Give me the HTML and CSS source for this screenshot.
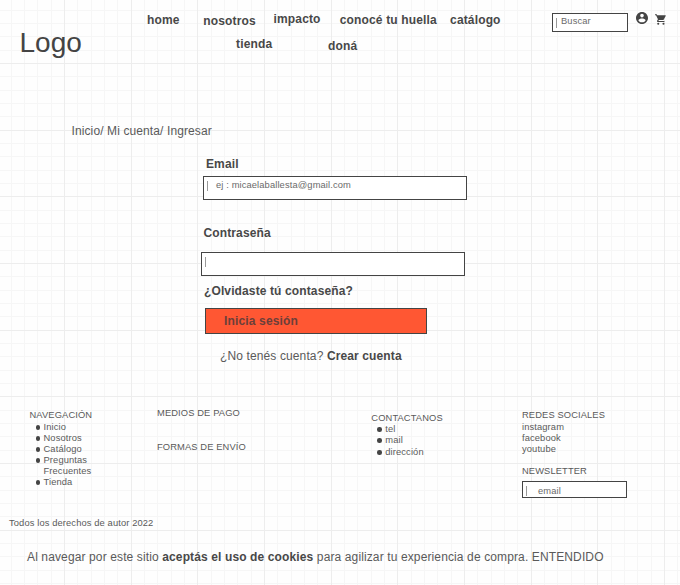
FILE: index.html
```html
<!DOCTYPE html>
<html lang="es">
<head>
<meta charset="utf-8">
<title>Ingresar</title>
<link rel="stylesheet" href="styles.css">
</head>
<body>
<header class="header">
  <div class="logo">Logo</div>
  <nav class="nav">
    <div class="nav-row">
      <a class="home">home</a><a class="nosotros">nosotros</a><a class="impacto">impacto</a><a class="huella">conocé tu huella</a><a class="catalogo">catálogo</a>
    </div>
    <div class="nav-row nav-row-second">
      <a class="tienda">tienda</a><a class="dona">doná</a>
    </div>
  </nav>
  <div class="search field"><i class="caret"></i><span>Buscar</span></div>
  <svg class="account" viewBox="2 2 20 20"><path d="M12 2C6.480 2 2 6.480 2 12s4.480 10 10 10 10-4.480 10-10S17.520 2 12 2zm0 3c1.660 0 3 1.340 3 3s-1.340 3-3 3-3-1.340-3-3 1.340-3 3-3zm0 14.200c-2.500 0-4.710-1.280-6-3.220.030-1.990 4-3.080 6-3.080 1.990 0 5.970 1.090 6 3.080-1.290 1.940-3.500 3.220-6 3.220z"/></svg>
  <svg class="cart" viewBox="1 2 21 20"><path d="M1 2v2h2l3.600 7.600L5 14.500c-.6 1.200.5 2.500 2 2.500h12v-2H7.400l1.100-2h7.500c.8 0 1.400-.4 1.700-1l3.700-6.500c.4-.7 0-1.500-.9-1.500H5.200l-.9-2z"/><circle cx="7.200" cy="20" r="2"/><circle cx="17.200" cy="20" r="2"/></svg>
</header>
<main class="main">
  <div class="crumbs">Inicio/ Mi cuenta/ Ingresar</div>
  <form class="login">
    <label class="label-email">Email</label>
    <div class="field input-email"><i class="caret"></i><span>ej : micaelaballesta@gmail.com</span></div>
    <label class="label-pass">Contraseña</label>
    <div class="field input-pass"><i class="caret"></i></div>
    <a class="forgot">¿Olvidaste tú contaseña?</a>
    <div class="submit"><span>Inicia sesión</span></div>
    <p class="signup">¿No tenés cuenta? <b>Crear cuenta</b></p>
  </form>
</main>
<footer class="footer">
  <section class="col-nav">
    <h4>NAVEGACIÓN</h4>
    <ul><li>Inicio</li><li>Nosotros</li><li>Catálogo</li><li>Preguntas<br>Frecuentes</li><li>Tienda</li></ul>
  </section>
  <section class="col-pay">
    <h4>MEDIOS DE PAGO</h4>
    <h4 class="shipping">FORMAS DE ENVÍO</h4>
  </section>
  <section class="col-contact">
    <h4>CONTACTANOS</h4>
    <ul><li>tel</li><li>mail</li><li>dirección</li></ul>
  </section>
  <section class="col-social">
    <h4>REDES SOCIALES</h4>
    <p>instagram<br>facebook<br>youtube</p>
    <h4 class="newsletter">NEWSLETTER</h4>
    <div class="field input-news"><i class="caret"></i><span>email</span></div>
  </section>
</footer>
<div class="copyright">Todos los derechos de autor 2022</div>
<div class="cookies">Al navegar por este sitio <b>aceptás el uso de cookies</b> para agilizar tu experiencia de compra. <span>ENTENDIDO</span></div>
</body>
</html>
```
FILE: styles.css
```css
* { box-sizing: border-box; margin: 0; padding: 0; }
body {
  width: 680px;
  height: 585px;
  overflow: hidden;
  font: 12px/14px "Liberation Sans", Arial, sans-serif;
  color: #5a5a5a;
  background-color: #fefefe;
  background-image:
    repeating-linear-gradient(90deg, #ededed 0 1px, transparent 1px 66.667px),
    repeating-linear-gradient(180deg, #ededed 0 1px, transparent 1px 66.667px),
    repeating-linear-gradient(90deg, #f6f6f6 0 1px, transparent 1px 13.333px),
    repeating-linear-gradient(180deg, #f6f6f6 0 1px, transparent 1px 13.333px);
  background-size: 800px 800px;
  background-position: -2.6px -3.6px;
}
b { color: #484848; }
a, label { display: block; font-weight: bold; color: #484848; white-space: nowrap; }

.field { display: flex; border: 1px solid #444; background: #fff; font-size: 9.333px; line-height: 11px; letter-spacing: .12px; color: #6a6a6a; white-space: nowrap; }
.caret { flex: none; width: 1px; height: 10px; background: #999; }

.header { display: flex; height: 124px; padding-left: 19.500px; color: #444; }
.logo { width: 127.500px; padding-top: 27px; font-size: 28px; line-height: 31px; }
.nav { width: 405px; padding-top: 13px; }
.nav-row { display: flex; height: 24px; letter-spacing: .15px; }
.nosotros { margin: 1px 0 0 23.700px; }
.impacto { margin: -1px 0 0 17.700px; }
.huella { margin-left: 19.200px; }
.catalogo { margin-left: 13.200px; }
.tienda { margin-left: 89px; }
.dona { margin: 2px 0 0 55.700px; }
.search { width: 76px; height: 19px; margin-top: 13px; padding: 2px 0 0 3px; }
.search .caret { margin-top: 2px; }
.search span { margin-left: 4px; }
.account { width: 12px; height: 12px; margin: 12px 0 0 8px; fill: #444; }
.cart { width: 11px; height: 11px; margin: 14px 0 0 7px; fill: #444; }

.main { height: 284px; }
.crumbs { padding-left: 71.500px; letter-spacing: .11px; }
.login { padding: 19px 0 0 201px; letter-spacing: .12px; }
.label-email { margin-left: 5px; }
.input-email { width: 264px; height: 24px; margin: 5px 0 0 2px; padding: 3px 0 0 3px; }
.input-email .caret { margin-top: 1px; }
.input-email span { margin-left: 8px; }
.label-pass { margin: 26px 0 0 2.500px; }
.input-pass { width: 264px; height: 24px; margin-top: 12px; padding: 4px 0 0 3px; }
.forgot { margin: 8px 0 0 3px; }
.submit { width: 222px; height: 26px; margin: 10px 0 0 4px; padding: 5px 0 0 18px; border: 1px solid #444; background: #ff5733; font-weight: bold; color: #6b3f3a; letter-spacing: .15px; }
.signup { margin: 15px 0 0 19px; }

.footer { display: flex; height: 110px; padding-left: 29.500px; font-size: 9.333px; line-height: 11px; letter-spacing: .12px; }
.footer h4 { font-size: inherit; font-weight: normal; white-space: nowrap; }
.footer ul { list-style: none; }
.footer li { display: flow-root; position: relative; padding-left: 14px; }
.footer li::before { content: ""; position: absolute; left: 6px; top: 3px; width: 4.500px; height: 4.500px; border-radius: 50%; background: #444; }
.col-nav { width: 127.500px; padding-top: 2px; }
.col-nav ul { padding-top: 1px; }
.col-pay { width: 214.300px; }
.shipping { margin-top: 23px; }
.col-contact { width: 150.700px; padding-top: 5px; }
.col-contact li:last-child { margin-top: 1px; }
.col-social { padding-top: 2px; }
.col-social p { padding-top: 1px; }
.newsletter { margin-top: 11px; }
.input-news { width: 105px; height: 17px; margin-top: 4px; padding: 4px 0 0 3px; }
.input-news span { margin-left: 11px; }
.copyright { padding-left: 9px; font-size: 9.333px; line-height: 11px; letter-spacing: .12px; }
.cookies { padding: 21px 0 0 27px; letter-spacing: .122px; white-space: nowrap; }
```
